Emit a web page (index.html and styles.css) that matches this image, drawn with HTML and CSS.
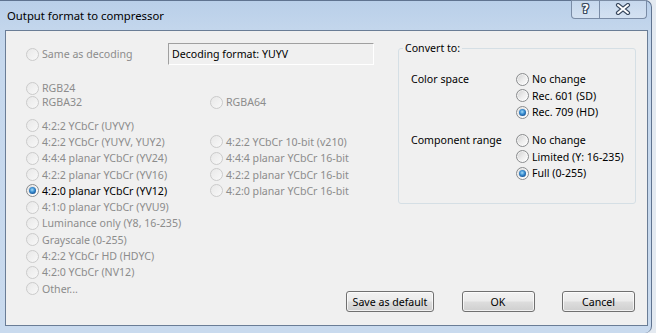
FILE: index.html
```html
<!DOCTYPE html>
<html>
<head>
<meta charset="utf-8">
<title>Output format to compressor</title>
<link rel="stylesheet" href="styles.css">
</head>
<body>
<div class="window">
  <div class="titlebar">
    <div class="title">Output format to compressor</div>
    <div class="caption-buttons">
      <div class="cbtn help"><span class="help-glyph">?</span></div>
      <div class="cbtn close">
        <svg width="16" height="12" viewBox="0 0 16 12">
          <path d="M3 2 L13 10 M13 2 L3 10" stroke="#3a4a60" stroke-width="4.2" stroke-linecap="round" fill="none"/>
          <path d="M3 2 L13 10 M13 2 L3 10" stroke="#ffffff" stroke-width="2" stroke-linecap="round" fill="none"/>
        </svg>
      </div>
    </div>
  </div>
  <div class="client">
    <div class="left">
      <div class="row row-same">
        <div class="opt cell-same"><span class="radio off"></span><span class="txt dim">Same as decoding</span></div>
        <div class="readonly">Decoding format: YUYV</div>
      </div>
      <div class="rgb">
        <div class="row r14"><div class="opt cell"><span class="radio off"></span><span class="txt dim">RGB24</span></div></div>
        <div class="row r14"><div class="opt cell"><span class="radio off"></span><span class="txt dim">RGBA32</span></div><div class="opt"><span class="radio off"></span><span class="txt dim">RGBA64</span></div></div>
      </div>
      <div class="yuv">
        <div class="row r16"><div class="opt cell"><span class="radio off"></span><span class="txt dim">4:2:2 YCbCr (UYVY)</span></div></div>
        <div class="row r16"><div class="opt cell"><span class="radio off"></span><span class="txt dim">4:2:2 YCbCr (YUYV, YUY2)</span></div><div class="opt"><span class="radio off"></span><span class="txt dim">4:2:2 YCbCr 10-bit (v210)</span></div></div>
        <div class="row r16"><div class="opt cell"><span class="radio off"></span><span class="txt dim">4:4:4 planar YCbCr (YV24)</span></div><div class="opt"><span class="radio off"></span><span class="txt dim">4:4:4 planar YCbCr 16-bit</span></div></div>
        <div class="row r16"><div class="opt cell"><span class="radio off"></span><span class="txt dim">4:2:2 planar YCbCr (YV16)</span></div><div class="opt"><span class="radio off"></span><span class="txt dim">4:2:2 planar YCbCr 16-bit</span></div></div>
        <div class="row r16"><div class="opt cell"><span class="radio on"><span class="dot"></span></span><span class="txt">4:2:0 planar YCbCr (YV12)</span></div><div class="opt"><span class="radio off"></span><span class="txt dim">4:2:0 planar YCbCr 16-bit</span></div></div>
        <div class="row r16"><div class="opt cell"><span class="radio off"></span><span class="txt dim">4:1:0 planar YCbCr (YVU9)</span></div></div>
        <div class="row r16"><div class="opt cell"><span class="radio off"></span><span class="txt dim">Luminance only (Y8, 16-235)</span></div></div>
        <div class="row r16"><div class="opt cell"><span class="radio off"></span><span class="txt dim">Grayscale (0-255)</span></div></div>
        <div class="row r16"><div class="opt cell"><span class="radio off"></span><span class="txt dim">4:2:2 YCbCr HD (HDYC)</span></div></div>
        <div class="row r16"><div class="opt cell"><span class="radio off"></span><span class="txt dim">4:2:0 YCbCr (NV12)</span></div></div>
        <div class="row r16"><div class="opt cell"><span class="radio off"></span><span class="txt dim">Other...</span></div></div>
      </div>
    </div>
    <div class="right">
      <fieldset class="group">
        <legend class="group-title">Convert to:</legend>
        <div class="setting">
          <div class="setting-label">Color space</div>
          <div class="choices">
            <div class="opt g"><span class="radio on"></span><span class="txt">No change</span></div>
            <div class="opt g"><span class="radio on"></span><span class="txt">Rec. 601 (SD)</span></div>
            <div class="opt g"><span class="radio on"><span class="dot"></span></span><span class="txt">Rec. 709 (HD)</span></div>
          </div>
        </div>
        <div class="setting second">
          <div class="setting-label">Component range</div>
          <div class="choices">
            <div class="opt g"><span class="radio on"></span><span class="txt">No change</span></div>
            <div class="opt g"><span class="radio on"></span><span class="txt">Limited (Y: 16-235)</span></div>
            <div class="opt g"><span class="radio on"><span class="dot"></span></span><span class="txt">Full (0-255)</span></div>
          </div>
        </div>
      </fieldset>
      <div class="buttons">
        <div class="btn wide">Save as default</div>
        <div class="btn">OK</div>
        <div class="btn">Cancel</div>
      </div>
    </div>
  </div>
</div>
</body>
</html>
```
FILE: styles.css
```css
* { box-sizing: border-box; }
html, body { margin: 0; padding: 0; }
body {
  width: 656px;
  height: 333px;
  overflow: hidden;
  background: #e4eaf1;
  font-family: "Noto Sans", "Open Sans", "Liberation Sans", sans-serif;
  font-size: 10.6px;
  color: #000;
}
.window {
  width: 652px;
  height: 333px;
  display: flex;
  flex-direction: column;
  background: linear-gradient(180deg, #b9cfe9 0px, #c3d6ec 28px, #c6d8ed 60px, #c9daee 100%);
  border-top: 1px solid #5f7390;
  border-right: 1px solid #5f7390;
  border-top-right-radius: 7px;
  border-bottom-right-radius: 7px;
}
.titlebar {
  flex: none;
  height: 29px;
  display: flex;
  align-items: flex-start;
}
.title {
  padding-left: 7px;
  line-height: 29px;
  font-size: 11.3px;
  white-space: nowrap;
}
.caption-buttons {
  flex: none;
  margin-left: auto;
  margin-right: 4px;
  margin-top: -1px;
  height: 19px;
  display: flex;
  border: 1px solid #7a8ca6;
  border-top: 0;
  border-radius: 0 0 4px 4px;
  overflow: hidden;
  background: linear-gradient(180deg, rgba(255,255,255,0.18), rgba(255,255,255,0.32));
}
.cbtn {
  flex: none;
  display: flex;
  align-items: center;
  justify-content: center;
  height: 18px;
}
.cbtn.help {
  width: 28px;
  border-right: 1px solid #7a8ca6;
}
.cbtn.close { width: 46px; }
.help-glyph {
  font-family: "DejaVu Sans", sans-serif;
  font-weight: bold;
  font-size: 12px;
  line-height: 12px;
  color: #fff;
  text-shadow: 1px 0 0 #3a4a60, -1px 0 0 #3a4a60, 0 1px 0 #3a4a60, 0 -1px 0 #3a4a60, 1px 1px 0 #3a4a60, -1px -1px 0 #3a4a60, 1px -1px 0 #3a4a60, -1px 1px 0 #3a4a60;
}
.client {
  flex: none;
  margin-left: 5px;
  width: 643px;
  height: 296px;
  border: 1px solid #6a7d96;
  background: #f0f0f0;
  display: flex;
}
.left {
  flex: 0 0 340px;
  min-width: 0;
  padding-left: 20px;
  padding-top: 12px;
}
.row {
  display: flex;
  align-items: center;
  white-space: nowrap;
}
.row-same { height: 22px; }
.cell-same { flex: none; width: 142px; }
.readonly {
  flex: none;
  width: 206px;
  height: 22px;
  border-top: 1px solid #a0a0a0;
  border-left: 1px solid #a0a0a0;
  border-bottom: 1px solid #ffffff;
  border-right: 1px solid #ffffff;
  padding-left: 3px;
  display: flex;
  align-items: center;
}
.rgb { margin-top: 16.3px; }
.r14 { height: 14px; }
.yuv { margin-top: 8.2px; }
.r16 { height: 16.3px; }
.cell { flex: none; width: 184px; }
.opt {
  display: flex;
  align-items: center;
  white-space: nowrap;
}
.txt { line-height: 14px; }
.dim { color: #8c8c8c; }
.radio {
  flex: none;
  width: 13px;
  height: 13px;
  border-radius: 50%;
  margin-right: 3px;
  display: flex;
  align-items: center;
  justify-content: center;
}
.radio.off {
  border: 1px solid #cbcbcb;
  background: linear-gradient(135deg, #e8e8e8 0%, #f8f8f8 100%);
}
.radio.on {
  border: 1px solid #8a8c8e;
  background: linear-gradient(135deg, #cfcfcf 0%, #eeeeee 55%, #ffffff 100%);
  box-shadow: inset 0 0 0 1px rgba(255,255,255,0.6);
}
.dot {
  width: 7px;
  height: 7px;
  border-radius: 50%;
  background: radial-gradient(circle at 45% 40%, #a6dcf8 0%, #3b8fd2 40%, #124d8f 80%, #0b3466 100%);
}
.right {
  flex: 1;
  min-width: 0;
  display: flex;
  flex-direction: column;
  padding: 9px 12px 13px 0;
}
.group {
  margin: 0 -1px 0 52px;
  padding: 15px 12px 21.75px 12px;
  border: 1px solid #d5dfe5;
  border-radius: 3px;
  min-width: 0;
}
.group-title {
  padding: 0 2px;
  margin-left: -8px;
  line-height: 16px;
}
.setting { display: flex; }
.setting.second { margin-top: 11.25px; }
.setting-label {
  flex: none;
  width: 105px;
  height: 16.5px;
  line-height: 16.5px;
  white-space: nowrap;
}
.choices { display: flex; flex-direction: column; }
.opt.g { height: 16.5px; }
.buttons {
  margin-top: auto;
  display: flex;
  justify-content: space-between;
}
.btn {
  flex: none;
  width: 73px;
  height: 21px;
  border: 1px solid #707070;
  border-radius: 3px;
  background: linear-gradient(180deg, #f2f2f2 0%, #ebebeb 48%, #dddddd 52%, #cfcfcf 100%);
  box-shadow: inset 0 0 0 1px rgba(255,255,255,0.7);
  display: flex;
  align-items: center;
  justify-content: center;
  white-space: nowrap;
}
.btn.wide { width: 88px; }
```
